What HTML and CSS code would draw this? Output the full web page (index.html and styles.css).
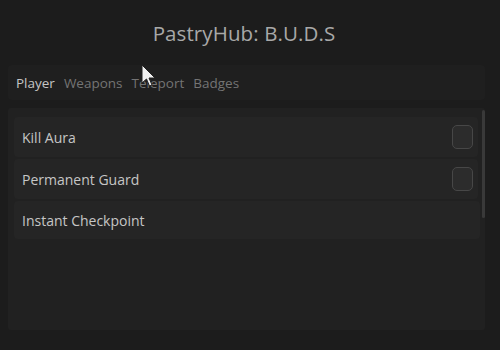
FILE: index.html
```html
<!DOCTYPE html>
<html>
<head>
<meta charset="utf-8">
<link rel="stylesheet" href="styles.css">
</head>
<body>
<div class="window">
  <div class="title">PastryHub: B.U.D.S</div>
  <div class="tabs">
    <span class="tab active">Player</span>
    <span class="tab">Weapons</span>
    <span class="tab">Teleport</span>
    <span class="tab">Badges</span>
  </div>
  <div class="panel">
    <div class="list">
      <div class="row"><span>Kill Aura</span><span class="check"></span></div>
      <div class="row"><span>Permanent Guard</span><span class="check"></span></div>
      <div class="row wide"><span>Instant Checkpoint</span></div>
    </div>
    <div class="scrollbar"></div>
  </div>
  <svg class="cursor" width="16" height="24" viewBox="0 0 16 24">
    <path d="M1 1 L1 19 L5.5 15 L8.5 22 L11 21 L8 14 L14 14 Z" fill="#f2f2f2" stroke="#222" stroke-width="1"/>
  </svg>
</div>
</body>
</html>
```
FILE: styles.css
```css
html, body {
  margin: 0;
  padding: 0;
  background: #1b1b1b;
}
.window {
  position: relative;
  width: 500px;
  height: 350px;
  background: #1c1c1c;
  font-family: "Open Sans", "Liberation Sans", sans-serif;
  overflow: hidden;
}
.title {
  height: 65px;
  display: flex;
  align-items: center;
  justify-content: center;
  padding-right: 12px;
  font-size: 20.5px;
  color: #a8a8a8;
  letter-spacing: 0.1px;
}
.tabs {
  margin: 0 15px 0 8px;
  height: 35px;
  background: #1f1f1f;
  border-radius: 4px;
  display: flex;
  align-items: center;
  gap: 9px;
  padding-left: 8px;
  font-size: 13.5px;
  color: #747474;
}
.tab.active {
  color: #c4c4c4;
}
.panel {
  margin: 8px 15px 0 8px;
  height: 222px;
  background: #212121;
  border-radius: 3px;
  display: flex;
  padding: 9px 0 0 6px;
  box-sizing: border-box;
}
.list {
  flex: 1;
  display: flex;
  flex-direction: column;
  gap: 2px;
}
.row {
  height: 40px;
  margin-right: 4px;
  background: #252525;
  border-radius: 4px;
  display: flex;
  align-items: center;
  justify-content: space-between;
  padding: 0 5px 0 8px;
  font-size: 14px;
  color: #c6c6c6;
}
.row.wide {
  margin-right: 2px;
  height: 38px;
}
.check {
  width: 19px;
  height: 22px;
  border: 1.5px solid #474747;
  border-radius: 5px;
  background: #2c2c2c;
}
.scrollbar {
  width: 3px;
  height: 108px;
  margin: -7px 0 0 0;
  background: #393939;
  border-radius: 2px;
}
.cursor {
  position: absolute;
  left: 141px;
  top: 64px;
}
```
